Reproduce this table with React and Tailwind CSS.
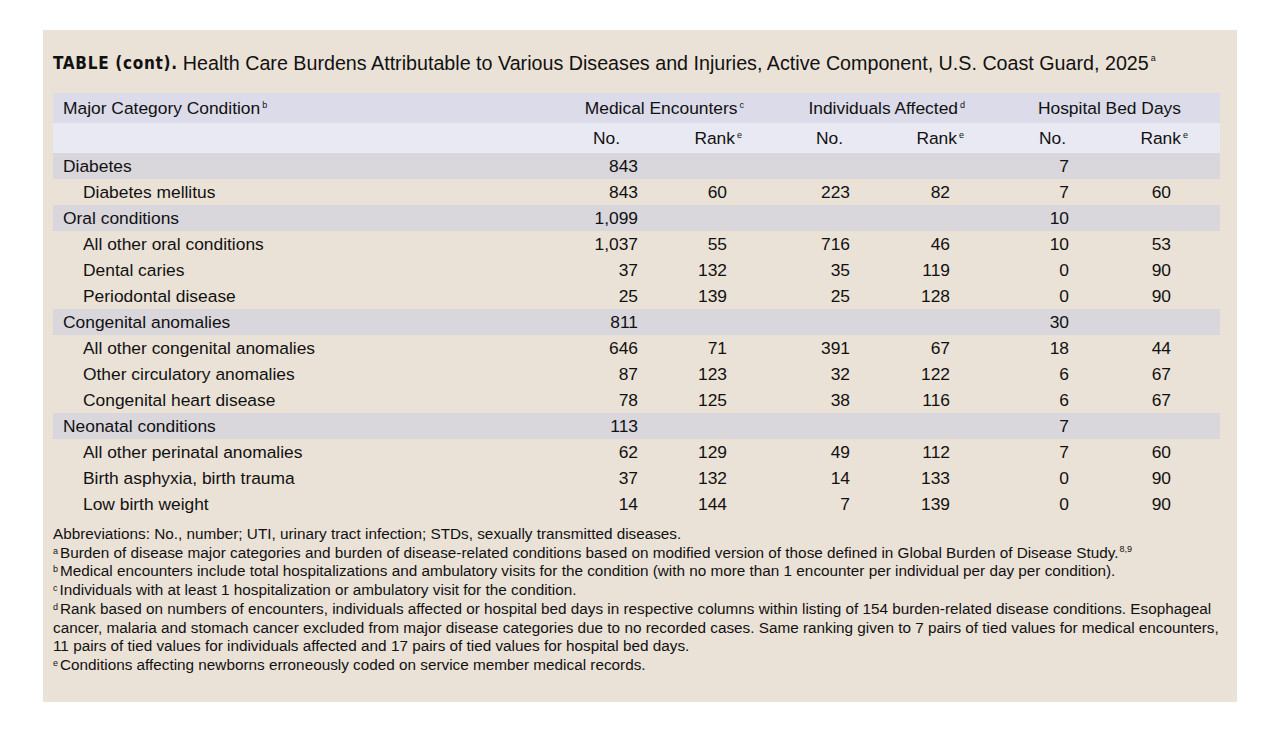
const rows = [
  { cat: true, label: "Diabetes", v: ["843", "", "", "", "7", ""] },
  { label: "Diabetes mellitus", v: ["843", "60", "223", "82", "7", "60"] },
  { cat: true, label: "Oral conditions", v: ["1,099", "", "", "", "10", ""] },
  { label: "All other oral conditions", v: ["1,037", "55", "716", "46", "10", "53"] },
  { label: "Dental caries", v: ["37", "132", "35", "119", "0", "90"] },
  { label: "Periodontal disease", v: ["25", "139", "25", "128", "0", "90"] },
  { cat: true, label: "Congenital anomalies", v: ["811", "", "", "", "30", ""] },
  { label: "All other congenital anomalies", v: ["646", "71", "391", "67", "18", "44"] },
  { label: "Other circulatory anomalies", v: ["87", "123", "32", "122", "6", "67"] },
  { label: "Congenital heart disease", v: ["78", "125", "38", "116", "6", "67"] },
  { cat: true, label: "Neonatal conditions", v: ["113", "", "", "", "7", ""] },
  { label: "All other perinatal anomalies", v: ["62", "129", "49", "112", "7", "60"] },
  { label: "Birth asphyxia, birth trauma", v: ["37", "132", "14", "133", "0", "90"] },
  { label: "Low birth weight", v: ["14", "144", "7", "139", "0", "90"] },
];

const numPr = ["pr-[12px]", "pr-[33px]", "pr-[20px]", "pr-[40px]", "pr-[21px]", "pr-[49px]"];
const hdrPr = ["pr-[30px]", "pr-[18px]", "pr-[27px]", "pr-[26px]", "pr-[24px]", "pr-[32px]"];
const grid = "grid grid-cols-[517px_80px_110px_110px_120px_100px_130px]";

const notes = [
  { sup: "", text: "Abbreviations: No., number; UTI, urinary tract infection; STDs, sexually transmitted diseases." },
  { sup: "a", text: "Burden of disease major categories and burden of disease-related conditions based on modified version of those defined in Global Burden of Disease Study.", tail: "8,9" },
  { sup: "b", text: "Medical encounters include total hospitalizations and ambulatory visits for the condition (with no more than 1 encounter per individual per day per condition)." },
  { sup: "c", text: "Individuals with at least 1 hospitalization or ambulatory visit for the condition." },
  { sup: "d", text: "Rank based on numbers of encounters, individuals affected or hospital bed days in respective columns within listing of 154 burden-related disease conditions. Esophageal cancer, malaria and stomach cancer excluded from major disease categories due to no recorded cases. Same ranking given to 7 pairs of tied values for medical encounters, 11 pairs of tied values for individuals affected and 17 pairs of tied values for hospital bed days." },
  { sup: "e", text: "Conditions affecting newborns erroneously coded on service member medical records." },
];

function Sup({ children }) {
  return <span className="relative -top-[6px] text-[9px] leading-none ml-[2px]">{children}</span>;
}

export default function App() {
  return (
    <div className="w-[1280px] h-[732px] bg-white pt-[30px] pl-[43px] font-['Liberation_Sans',Arial,sans-serif] text-[#111]">
      <div className="w-[1194px] h-[672px] bg-[#ebe2d7] px-[10px] pt-[22px]">
        <div className="h-[24px] flex items-center text-[19.7px] whitespace-nowrap">
          <span className="font-['DejaVu_Sans_Condensed','DejaVu_Sans',sans-serif] font-stretch-condensed font-bold text-[17px] tracking-[0.7px] mr-[5px]">
            TABLE (cont).
          </span>
          <span>
            Health Care Burdens Attributable to Various Diseases and Injuries, Active Component, U.S. Coast Guard, 2025
          </span>
          <Sup>a</Sup>
        </div>

        <div className="mt-[17px] w-[1167px] text-[17.4px]">
          <div className={`${grid} h-[30px] items-center bg-[#dcdbe9]`}>
            <div className="pl-[10px]">
              Major Category Condition<Sup>b</Sup>
            </div>
            <div className="col-span-2 text-right pr-[16px]">
              Medical Encounters<Sup>c</Sup>
            </div>
            <div className="col-span-2 text-right pr-[25px]">
              Individuals Affected<Sup>d</Sup>
            </div>
            <div className="col-span-2 text-right pr-[39px]">Hospital Bed Days</div>
          </div>
          <div className={`${grid} h-[30px] items-center bg-[#e9e9f3]`}>
            <div />
            {["No.", "Rank", "No.", "Rank", "No.", "Rank"].map((h, i) => (
              <div key={i} className={`text-right ${hdrPr[i]}`}>
                {h}
                {h === "Rank" && <Sup>e</Sup>}
              </div>
            ))}
          </div>
          {rows.map((r, i) => (
            <div key={i} className={`${grid} h-[26px] items-center ${r.cat ? "bg-[#d9d6dc]" : ""}`}>
              <div className={r.cat ? "pl-[10px]" : "pl-[30px]"}>{r.label}</div>
              {r.v.map((n, j) => (
                <div key={j} className={`text-right ${numPr[j]}`}>
                  {n}
                </div>
              ))}
            </div>
          ))}
        </div>

        <div className="mt-[8px] text-[15.3px] leading-[18.7px] w-[1180px]">
          {notes.map((n, i) => (
            <p key={i}>
              {n.sup && <span className="relative -top-[4px] text-[9px] leading-none mr-[2px]">{n.sup}</span>}
              {n.text}
              {n.tail && <span className="relative -top-[6px] text-[9px] leading-none ml-[1px]">{n.tail}</span>}
            </p>
          ))}
        </div>
      </div>
    </div>
  );
}
